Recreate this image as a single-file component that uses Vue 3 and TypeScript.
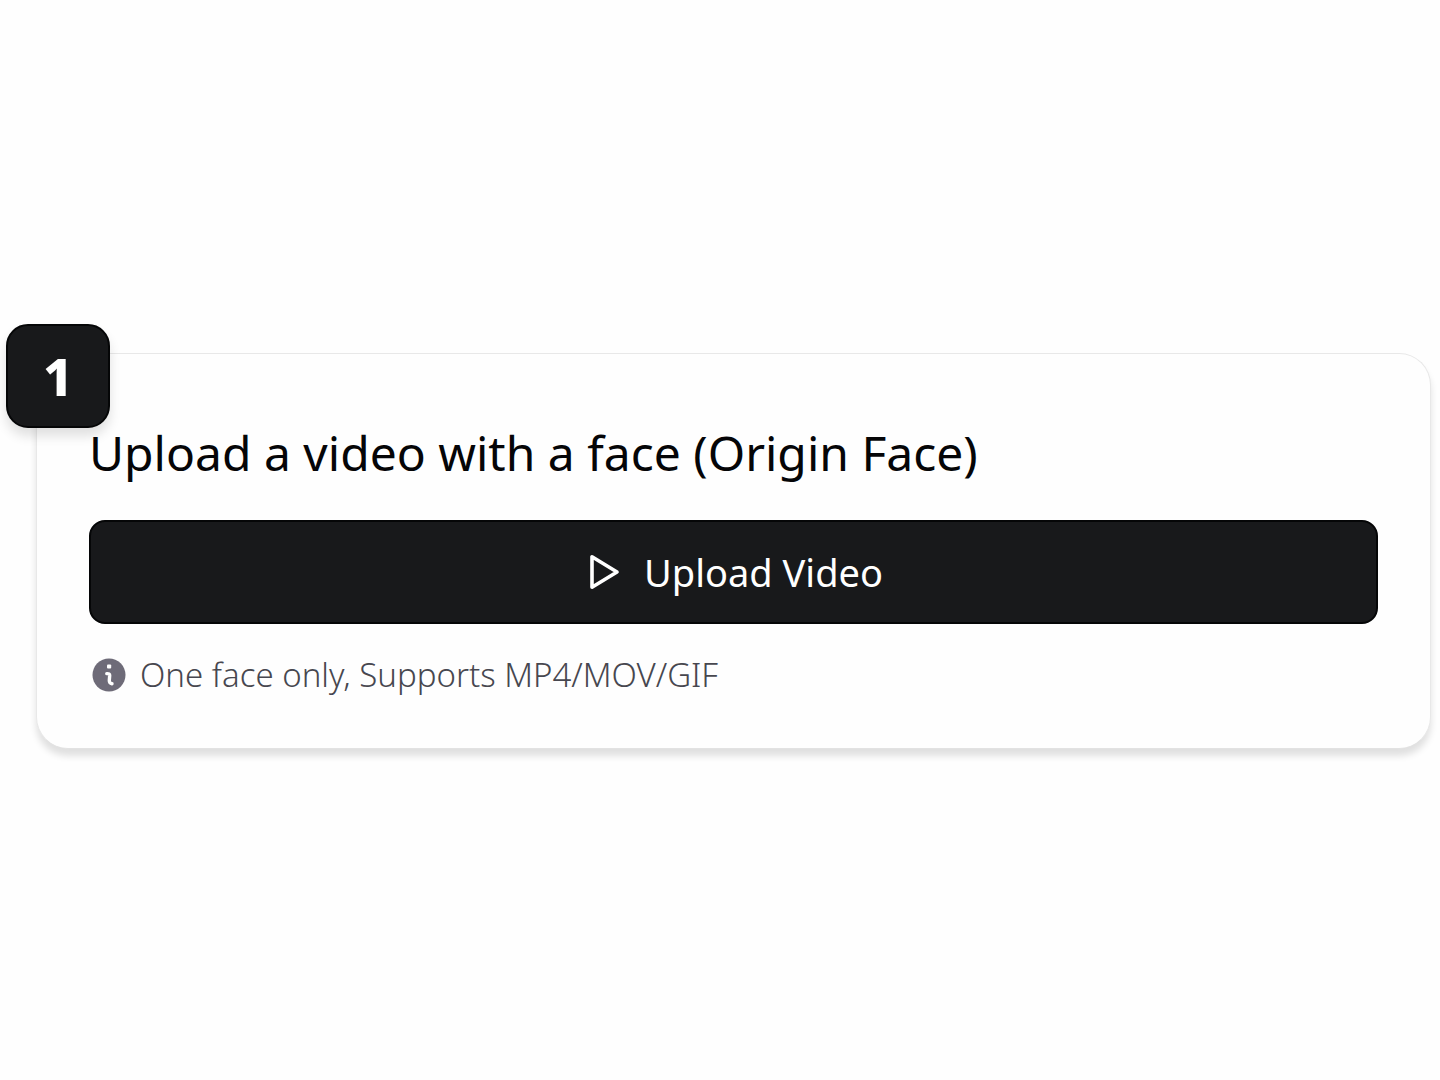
<script setup lang="ts">
import { ref } from 'vue'

const step = 1
const title = 'Upload a video with a face (Origin Face)'
const hint = 'One face only, Supports MP4/MOV/GIF'
const picker = ref<HTMLInputElement | null>(null)

function openPicker(): void {
  picker.value?.click()
}
</script>

<template>
  <main class="page">
    <section class="card" aria-labelledby="step-title">
      <span class="badge">{{ step }}</span>
      <h2 id="step-title" class="title">{{ title }}</h2>
      <button class="upload" type="button" @click="openPicker">
        <svg class="play" viewBox="0 0 40 40" aria-hidden="true">
          <path d="M8 4.8V35.2L33 20Z" />
        </svg>
        <span>Upload Video</span>
      </button>
      <input ref="picker" type="file" accept="video/mp4,video/quicktime,image/gif" aria-label="Video file" hidden />
      <p class="hint">
        <svg class="info" viewBox="0 0 34 34" aria-hidden="true">
          <circle cx="17" cy="17" r="16.5" fill="#6e6b78" />
          <rect x="15" y="6.4" width="4.2" height="4.2" rx="1" fill="#fff" />
          <path d="M14.8 15.6Q17.8 15.4 17.7 17.4L17.3 22.4Q17.2 25.4 20 25.8" fill="none" stroke="#fff" stroke-width="3.4" stroke-linecap="round" stroke-linejoin="round" />
        </svg>
        <span>{{ hint }}</span>
      </p>
    </section>
  </main>
</template>

<style>
body {
  margin: 0;
  background: #fefefe;
}
</style>

<style scoped>
.page {
  padding: 353px 9px 48px 36px;
  font-family: "Noto Sans", "Open Sans", sans-serif;
}

.card {
  position: relative;
  display: flex;
  flex-direction: column;
  padding: 63px 52px 50px;
  border: 1px solid #e8e8e8;
  border-bottom-color: #e2e2e2;
  border-radius: 32px;
  background: #fefefe;
  box-shadow: 0 7px 7px rgba(0, 0, 0, 0.12);
}

.badge {
  position: absolute;
  top: -30px;
  left: -31px;
  display: flex;
  align-items: center;
  justify-content: center;
  box-sizing: border-box;
  width: 104px;
  height: 104px;
  border: 2px solid #050607;
  border-radius: 22px;
  background: #18191b;
  box-shadow: 0 8px 12px rgba(0, 0, 0, 0.12);
  color: #fff;
  font-size: 52px;
  font-weight: 800;
  line-height: 72px;
}

.title {
  margin: 0;
  color: #050507;
  font-size: 48px;
  font-weight: 400;
  line-height: 72px;
}

.upload {
  display: flex;
  align-items: center;
  justify-content: center;
  gap: 20px;
  height: 104px;
  margin: 31px 0 0;
  padding: 0;
  border: 2px solid #050607;
  border-radius: 16px;
  background: #18191b;
  color: #fff;
  font-family: inherit;
  font-size: 38px;
  line-height: 52px;
  cursor: pointer;
}

.play {
  width: 40px;
  height: 40px;
  fill: none;
  stroke: #fff;
  stroke-width: 3.6;
  stroke-linejoin: round;
}

.hint {
  display: flex;
  align-items: center;
  gap: 14px;
  margin: 28px 0 0;
  padding-left: 3px;
  color: #47474f;
  font-size: 33px;
  font-weight: 300;
  line-height: 46px;
}

.info {
  width: 34px;
  height: 34px;
}
</style>
